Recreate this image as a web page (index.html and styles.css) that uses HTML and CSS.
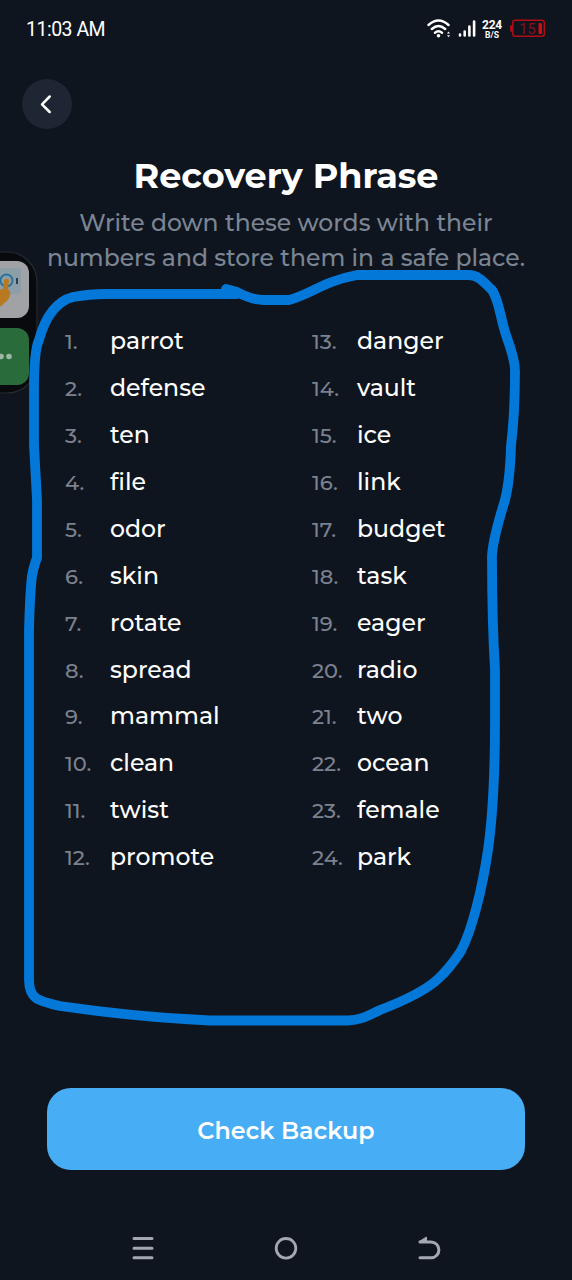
FILE: index.html
```html
<!DOCTYPE html>
<html lang="en">
<head>
<meta charset="utf-8">
<title>Recovery Phrase</title>
<link rel="stylesheet" href="styles.css">
</head>
<body>
<div class="screen">
  <header class="status">
    <span class="time">11:03 AM</span>
    <div class="indicators">
      <svg class="wifi" width="24" height="20" viewBox="0 0 24 20" fill="none" stroke="#fff" stroke-width="2.4" stroke-linecap="round">
        <path d="M1.500 6Q11.500-3 21.500 6M4.800 10Q11.500 4 18.200 10M8 13.700Q11.500 11 15 13.700"/>
        <circle cx="11.500" cy="16.700" r="1.800" fill="#fff" stroke="none"/>
        <path d="M20 14.500l1.500-2 1.500 2zM20 16.300h3l-1.500 2z" fill="#fff" stroke="none"/>
      </svg>
      <svg class="signal" width="18" height="18" viewBox="0 0 18 18" stroke="#fff" stroke-width="2.600" stroke-linecap="round">
        <path d="M2 15.500v-1M6.700 15.500v-4M11.400 15.500V6.500M16.100 15.500V1.500"/>
      </svg>
      <div class="speed"><span class="rate">224</span><span class="unit">B/S</span></div>
      <svg class="battery" width="37" height="19" viewBox="0 0 37 19">
        <rect x="3.800" y="1.200" width="31.500" height="16" rx="2.500" fill="none" stroke="#b20c14" stroke-width="1.500"/>
        <path d="M3 6Q1 6 1 8v3Q1 13 3 13z" fill="#b20c14"/>
        <rect x="29.500" y="4" width="3.500" height="11" rx="1" fill="#d20b13"/>
        <text x="18.500" y="14.700" class="charge">15</text>
      </svg>
    </div>
  </header>

  <button class="back" aria-label="Back">
    <svg width="50" height="50" viewBox="0 0 50 50" fill="none" stroke="#fff" stroke-width="2.500" stroke-linecap="round" stroke-linejoin="round"><path d="M27.700 17.500L20 25.300l7.700 7.700"/></svg>
  </button>

  <main class="content">
    <h1 class="title">Recovery Phrase</h1>
    <p class="subtitle">Write down these words with their<br>numbers and store them in a safe place.</p>
    <div class="phrase">
      <ol class="words">
        <li><span class="num">1.</span><span>parrot</span></li>
        <li><span class="num">2.</span><span>defense</span></li>
        <li><span class="num">3.</span><span>ten</span></li>
        <li><span class="num">4.</span><span>file</span></li>
        <li><span class="num">5.</span><span>odor</span></li>
        <li><span class="num">6.</span><span>skin</span></li>
        <li><span class="num">7.</span><span>rotate</span></li>
        <li><span class="num">8.</span><span>spread</span></li>
        <li><span class="num">9.</span><span>mammal</span></li>
        <li><span class="num">10.</span><span>clean</span></li>
        <li><span class="num">11.</span><span>twist</span></li>
        <li><span class="num">12.</span><span>promote</span></li>
      </ol>
      <ol class="words">
        <li><span class="num">13.</span><span>danger</span></li>
        <li><span class="num">14.</span><span>vault</span></li>
        <li><span class="num">15.</span><span>ice</span></li>
        <li><span class="num">16.</span><span>link</span></li>
        <li><span class="num">17.</span><span>budget</span></li>
        <li><span class="num">18.</span><span>task</span></li>
        <li><span class="num">19.</span><span>eager</span></li>
        <li><span class="num">20.</span><span>radio</span></li>
        <li><span class="num">21.</span><span>two</span></li>
        <li><span class="num">22.</span><span>ocean</span></li>
        <li><span class="num">23.</span><span>female</span></li>
        <li><span class="num">24.</span><span>park</span></li>
      </ol>
    </div>
    <button class="check">Check Backup</button>
  </main>

  <nav class="navbar">
    <svg width="24" height="26" viewBox="0 0 24 26" stroke="#a4a8b1" stroke-width="3" stroke-linecap="round"><path d="M3 3.500h18M3 13.300h18M3 22.700h18"/></svg>
    <svg width="24" height="26" viewBox="0 0 24 26" fill="none" stroke="#a4a8b1" stroke-width="2.800"><circle cx="12" cy="13.300" r="9.800"/></svg>
    <svg width="24" height="26" viewBox="0 0 24 26" fill="none" stroke="#a4a8b1" stroke-width="3" stroke-linecap="round" stroke-linejoin="round"><path d="M3 7h11a7.900 7.900 0 0 1 0 15.800H3"/><path d="M2.200 6.500L9.500 2v4.500z" fill="#a4a8b1" stroke-width="1"/></svg>
  </nav>

  <svg class="dock" width="40" height="146" viewBox="0 0 40 146">
    <path d="M-10 2H7A30 30 0 0 1 37 32V113A30 30 0 0 1 7 143H-10z" fill="#080a0e" stroke="#262a31" stroke-width="1.200"/>
    <rect x="-28" y="11" width="57" height="57" rx="12" fill="#a1a2a6"/>
    <rect x="-18" y="18" width="39" height="26" rx="3" fill="#8c9fa9"/>
    <circle cx="6.500" cy="30.500" r="6" fill="none" stroke="#28719d" stroke-width="1.800"/>
    <rect x="16" y="28" width="2" height="6" fill="#333e46"/>
    <path d="M4 30q3-3 5 0l-1 9q4 3 1 9L7 51l-4 3-1 2H-2V40L3 39z" fill="#b97921"/>
    <rect x="-28" y="78" width="57" height="57" rx="12" fill="#2a6b3c"/>
    <circle cx="1" cy="106.500" r="2.800" fill="#9eb8a5"/>
    <circle cx="9" cy="106.500" r="2.800" fill="#9eb8a5"/>
  </svg>

  <svg class="scribble" width="572" height="1280" viewBox="0 0 572 1280" fill="none" stroke="#0378d8" stroke-width="9.800" stroke-linecap="round" stroke-linejoin="round">
    <path d="M226 289L237 292Q252 300 264 300H289C309 295 324 281 357 275H468C480 275 485 284 492 290C500 302 500 319 507 338Q515 360 515 371C515 400 514 421 511 446Q510 480 505 500Q491 545 492 560Q492 620 495 670V720Q495 800 488 850C482 890 472 930 461 951Q450 968 438 979Q422 994 380 1010C367 1016 361 1020 348 1020.500H210Q135 1017 60 1006C38 1001 29 999 29 980V630Q30 592 32 576Q34 565 37 558V500L34 445V390Q34 350 39 340C46 314 58 301 73 297Q90 294 105 294H237"/>
  </svg>
</div>
</body>
</html>
```
FILE: styles.css
```css
* { box-sizing: border-box; }
body {
  margin: 0;
  background: #0f151e;
  color: #fff;
  font-family: "Montserrat", Inter, "Open Sans", sans-serif;
}
.screen {
  position: relative;
  width: 572px;
  height: 1280px;
  overflow: hidden;
  display: flex;
  flex-direction: column;
}
.status {
  flex: none;
  height: 79px;
  padding: 17px 26px 0;
  display: flex;
  justify-content: space-between;
  align-items: flex-start;
  font-family: Roboto, sans-serif;
}
.time { font-size: 19.5px; line-height: 25px; letter-spacing: -.5px; }
.indicators { display: flex; align-items: flex-start; }
.wifi { margin: 2px 7px 0 0; }
.signal { margin: 3px 6px 0 0; }
.speed {
  width: 20px;
  margin: 3px 7px 0 0;
  display: flex;
  flex-direction: column;
  align-items: center;
  font-weight: 700;
}
.rate { font-size: 12px; line-height: 11px; letter-spacing: -.3px; }
.unit { font-size: 8.5px; line-height: 8px; }
.battery { margin-top: 2px; }
.charge {
  font: 14.5px Roboto, sans-serif;
  fill: #8a1018;
  text-anchor: middle;
}
.back {
  width: 50px;
  height: 50px;
  margin-left: 22px;
  padding: 0;
  border: 0;
  border-radius: 50%;
  background: #1d2632;
  flex: none;
}
.back svg { display: block; }
.content { padding: 26px 47px 0; flex: none; }
.title {
  margin: 0;
  font-size: 35px;
  font-weight: 700;
  line-height: 42px;
  text-align: center;
  white-space: nowrap;
}
.subtitle {
  margin: 8px -10px 0;
  color: #7b8594;
  font-size: 23.5px;
  font-weight: 500;
  line-height: 35px;
  text-align: center;
  white-space: nowrap;
}
.phrase {
  height: 813px;
  padding: 42.4px 0 0 18px;
  display: grid;
  grid-template-columns: 247px 1fr;
  align-content: start;
}
.words {
  margin: 0;
  padding: 0;
  list-style: none;
  font-size: 23.6px;
  font-weight: 500;
}
.words li {
  height: 46.9px;
  display: grid;
  grid-template-columns: 45px 1fr;
  align-items: center;
}
.num {
  padding-top: 2px;
  color: #7b818e;
  font-size: 21px;
}
.check {
  display: block;
  width: 478px;
  height: 82px;
  border: 0;
  border-radius: 24px;
  padding: 3px 0 0;
  background: #47adf5;
  color: #fff;
  font: 600 23.8px/30px "Montserrat", Inter, sans-serif;
}
.navbar {
  flex: none;
  height: 68px;
  margin-top: 43px;
  padding: 22px 131px 0;
  display: flex;
  justify-content: space-between;
  align-items: flex-start;
}
.dock { position: absolute; left: 0; top: 250px; }
.scribble { position: absolute; left: 0; top: 0; pointer-events: none; }
```
